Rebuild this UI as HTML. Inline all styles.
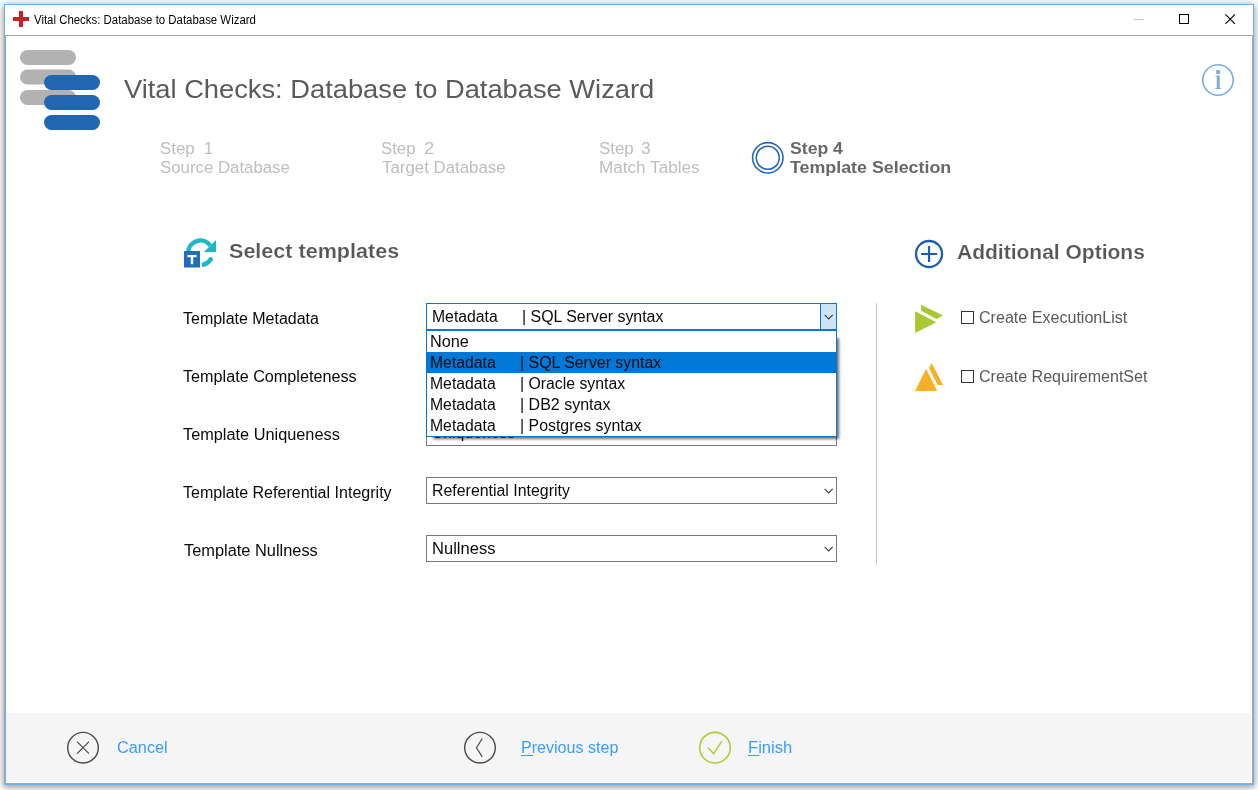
<!DOCTYPE html>
<html>
<head>
<meta charset="utf-8">
<title>Vital Checks: Database to Database Wizard</title>
<style>
html,body{margin:0;padding:0;}
body{width:1258px;height:790px;overflow:hidden;background:#fff;font-family:"Liberation Sans",sans-serif;position:relative;}
.abs{position:absolute;}
#win{position:absolute;left:4px;top:4px;width:1248px;height:779px;border:1px solid #6db2f2;background:#fff;box-shadow:0 1px 7px 1px rgba(0,0,0,0.33),0 3px 5px rgba(0,0,0,0.10);}
#inner{position:absolute;left:5px;top:35px;width:1246px;height:747px;border:1px solid #a8a5a2;background:#fff;}
#footer{position:absolute;left:6px;top:713px;width:1245px;height:69px;background:#f5f5f5;}
.t{position:absolute;white-space:nowrap;transform-origin:0 0;}
.combo{position:absolute;left:426px;width:409px;height:25px;border:1px solid #7a7a7a;background:#fff;}
.chev{position:absolute;left:396.500px;top:9.700px;}
.cb{position:absolute;width:11px;height:11px;border:1px solid #333;background:#fff;}
.ul{position:absolute;height:1px;background:#3b9cff;}
</style>
</head>
<body>
<div id="win"></div>
<div id="inner"></div>

<!-- title icon: red cross -->
<svg class="abs" style="left:13px;top:11px" width="16" height="16" viewBox="0 0 16 16"><path d="M6 0h4v6h6v4h-6v6H6v-6H0V6h6z" fill="#cc1f26"/></svg>

<!-- window controls -->
<svg class="abs" style="left:1128px;top:8px" width="120" height="24" viewBox="0 0 120 24">
  <path d="M6 11.500h10" stroke="#c2c2c2" stroke-width="1" fill="none"/>
  <rect x="51.500" y="6.500" width="9" height="9" stroke="#000" stroke-width="1" fill="none"/>
  <path d="M97.400 6.300l9.600 9.600M107 6.300l-9.600 9.600" stroke="#000" stroke-width="1.100" fill="none"/>
</svg>

<!-- logo -->
<svg class="abs" style="left:18px;top:48px" width="86" height="86" viewBox="18 48 86 86">
  <rect x="20" y="50" width="56" height="15" rx="7.500" fill="#b2b2b2"/>
  <rect x="20" y="69.500" width="56" height="15" rx="7.500" fill="#b2b2b2"/>
  <rect x="20" y="90" width="56" height="15" rx="7.500" fill="#b2b2b2"/>
  <rect x="44" y="75" width="56" height="15" rx="7.500" fill="#2166b0"/>
  <rect x="44" y="95" width="56" height="15" rx="7.500" fill="#2166b0"/>
  <rect x="44" y="115" width="56" height="15" rx="7.500" fill="#2166b0"/>
</svg>

<!-- info icon -->
<svg class="abs" style="left:1198px;top:60px" width="40" height="40" viewBox="1198 60 40 40">
  <circle cx="1217.950" cy="80" r="15.200" fill="none" stroke="#78ade2" stroke-width="1.600"/>
  <circle cx="1218.100" cy="72.100" r="2.250" fill="#78ade2"/>
  <path d="M1215.300 76.200 L1219.700 75.200 L1219.700 87.500 Q1219.700 88.200 1221.100 88.300 L1221.100 89 L1215.300 89 L1215.300 88.300 Q1216.800 88.200 1216.800 87.500 L1216.800 77.400 Q1216.800 76.700 1215.300 76.900 Z" fill="#78ade2"/>
</svg>

<!-- step 4 rings -->
<svg class="abs" style="left:750px;top:140px" width="36" height="36" viewBox="750 140 36 36">
  <circle cx="767.800" cy="157.800" r="15.200" fill="none" stroke="#2566bc" stroke-width="1.600"/>
  <circle cx="767.800" cy="157.800" r="11.500" fill="none" stroke="#2566bc" stroke-width="1.600"/>
</svg>

<!-- select templates heading icon -->
<svg class="abs" style="left:180px;top:234px" width="40" height="38" viewBox="180 234 40 38">
  <path d="M188.200 252.500 A12.200 12.200 0 0 1 210.300 245.600" fill="none" stroke="#1fb7c4" stroke-width="4.400"/>
  <path d="M216 240 L216 252 L204 252 Z" fill="#1fb7c4"/>
  <clipPath id="cl1"><rect x="201.900" y="250" width="20" height="20"/></clipPath>
  <path d="M210.690 259.260 A12.200 12.200 0 0 1 199.970 264.890" fill="none" stroke="#1fb7c4" stroke-width="4.400" clip-path="url(#cl1)"/>
  <circle cx="210.690" cy="259.260" r="2.200" fill="#1fb7c4"/>
  <rect x="184" y="251" width="16" height="16.500" fill="#216db8"/>
  <path d="M187.500 255h9v2.300h-3.300v7h-2.400v-7h-3.300z" fill="#fff"/>
</svg>

<!-- additional options heading icon -->
<svg class="abs" style="left:912px;top:237px" width="34" height="34" viewBox="912 237 34 34">
  <circle cx="929.050" cy="254" r="13" fill="none" stroke="#1e5eaf" stroke-width="2.300"/>
  <path d="M929.050 245.900V262.100M921 254H937.200" stroke="#1e5eaf" stroke-width="2.200" fill="none"/>
</svg>

<!-- combos -->
<div class="combo" id="c2" style="top:361px;"></div>
<div class="combo" id="c3" style="top:419px;"></div>
<div class="combo" id="c4" style="top:477px;">
  <svg class="chev" width="10" height="7" viewBox="0 0 10 7"><path d="M0.700 0.800l4 4 4-4" fill="none" stroke="#404040" stroke-width="1.200"/></svg></div>
<div class="combo" id="c5" style="top:535px;">
  <svg class="chev" width="10" height="7" viewBox="0 0 10 7"><path d="M0.700 0.800l4 4 4-4" fill="none" stroke="#404040" stroke-width="1.200"/></svg></div>
<div class="combo" id="c1" style="top:303px;border-color:#0078d7;">
  <div style="position:absolute;right:-1px;top:-1px;width:15px;height:25px;border:1px solid #0078d7;background:#cce4f7;"></div>
  <svg class="chev" width="10" height="7" viewBox="0 0 10 7"><path d="M0.700 0.800l4 4 4-4" fill="none" stroke="#404040" stroke-width="1.200"/></svg>
</div>

<!-- separator -->
<div class="abs" style="left:876px;top:303px;width:1px;height:262px;background:#c8c8c8;"></div>

<!-- options icons -->
<svg class="abs" style="left:912px;top:302px" width="34" height="34" viewBox="912 302 34 34">
  <path d="M915.100 311.300 L936.300 322.200 L915.100 333 Z" fill="#a7c830"/>
  <path d="M921.100 304.800 L943 315.400 L936.600 318.900 L921.100 310.800 Z" fill="#a7c830"/>
</svg>
<div class="cb" style="left:961px;top:311px;"></div>
<svg class="abs" style="left:912px;top:360px" width="34" height="34" viewBox="912 360 34 34">
  <path d="M915.100 390.900 L937.200 390.900 L926.100 368.800 Z" fill="#fcae28"/>
  <path d="M931.600 363 L943 385 L937.600 385 L929.050 368.200 Z" fill="#fcae28"/>
</svg>
<div class="cb" style="left:961px;top:370px;"></div>

<!-- footer -->
<div id="footer"></div>
<svg class="abs" style="left:65px;top:730px" width="36" height="36" viewBox="65 730 36 36">
  <circle cx="83" cy="747.700" r="15.300" fill="none" stroke="#4a4a4a" stroke-width="1.400"/>
  <path d="M77 741.700l12 12M89 741.700l-12 12" stroke="#4a4a4a" stroke-width="1.200" fill="none"/>
</svg>
<svg class="abs" style="left:462px;top:730px" width="36" height="36" viewBox="462 730 36 36">
  <circle cx="480" cy="747.700" r="15.300" fill="none" stroke="#4a4a4a" stroke-width="1.400"/>
  <path d="M482.200 738.500l-5.700 9.200 5.700 9.200" stroke="#4a4a4a" stroke-width="1.200" fill="none"/>
</svg>
<svg class="abs" style="left:697px;top:730px" width="36" height="36" viewBox="697 730 36 36">
  <circle cx="715" cy="747.700" r="15.300" fill="none" stroke="#b2c935" stroke-width="1.600"/>
  <path d="M707.900 747.800l5.700 5.800 8.300-12.400" stroke="#b2c935" stroke-width="1.500" fill="none"/>
</svg>
<div class="ul" style="left:521px;top:755px;width:12px;"></div>
<div class="ul" style="left:748px;top:755px;width:11px;"></div>

<div class="t" id="titletext" style="left:33.69px;top:13px;font-size:12px;line-height:14px;font-weight:normal;color:#000;transform:scaleX(0.9514);">Vital Checks: Database to Database Wizard</div>
<div class="t" id="h1" style="left:124.21px;top:74px;font-size:26.4px;line-height:30px;font-weight:normal;color:#5a5a5a;transform:scaleX(1.0337);">Vital Checks: Database to Database Wizard</div>
<div class="t" id="s1a" style="left:160.13px;top:140px;font-size:16px;line-height:17px;font-weight:normal;color:#bebebe;transform:scaleX(1.0558);">Step</div>
<div class="t" id="s1n" style="left:203.92px;top:140px;font-size:16px;line-height:17px;font-weight:normal;color:#bebebe;transform:scaleX(1.0000);">1</div>
<div class="t" id="s1b" style="left:160.13px;top:159px;font-size:16px;line-height:17px;font-weight:normal;color:#bebebe;transform:scaleX(1.0504);">Source Database</div>
<div class="t" id="s2a" style="left:381.13px;top:140px;font-size:16px;line-height:17px;font-weight:normal;color:#bebebe;transform:scaleX(1.0463);">Step</div>
<div class="t" id="s2n" style="left:423.75px;top:140px;font-size:16px;line-height:17px;font-weight:normal;color:#bebebe;transform:scaleX(1.1523);">2</div>
<div class="t" id="s2b" style="left:382.26px;top:159px;font-size:16px;line-height:17px;font-weight:normal;color:#bebebe;transform:scaleX(1.0532);">Target Database</div>
<div class="t" id="s3a" style="left:599.13px;top:140px;font-size:16px;line-height:17px;font-weight:normal;color:#bebebe;transform:scaleX(1.0558);">Step</div>
<div class="t" id="s3n" style="left:641.01px;top:140px;font-size:16px;line-height:17px;font-weight:normal;color:#bebebe;transform:scaleX(1.0783);">3</div>
<div class="t" id="s3b" style="left:599.15px;top:159px;font-size:16px;line-height:17px;font-weight:normal;color:#bebebe;transform:scaleX(1.0705);">Match Tables</div>
<div class="t" id="s4a" style="left:789.66px;top:140px;font-size:16px;line-height:17px;font-weight:bold;color:#686868;transform:scaleX(1.1018);">Step 4</div>
<div class="t" id="s4b" style="left:789.83px;top:159px;font-size:16px;line-height:17px;font-weight:bold;color:#686868;transform:scaleX(1.1146);">Template Selection</div>
<div class="t" id="sec1" style="left:229.44px;top:240px;font-size:20px;line-height:22px;font-weight:bold;color:#575757;transform:scaleX(1.0780);-webkit-text-stroke:0.16px #fff;">Select templates</div>
<div class="t" id="sec2" style="left:957.23px;top:241px;font-size:20px;line-height:22px;font-weight:bold;color:#575757;transform:scaleX(1.0503);-webkit-text-stroke:0.16px #fff;">Additional Options</div>
<div class="t" id="l1" style="left:183.28px;top:310px;font-size:16px;line-height:17px;font-weight:normal;color:#0a0a0a;transform:scaleX(0.9988);">Template Metadata</div>
<div class="t" id="l2" style="left:183.28px;top:368px;font-size:16px;line-height:17px;font-weight:normal;color:#0a0a0a;transform:scaleX(1.0117);">Template Completeness</div>
<div class="t" id="l3" style="left:183.17px;top:426px;font-size:16px;line-height:17px;font-weight:normal;color:#0a0a0a;transform:scaleX(1.0190);">Template Uniqueness</div>
<div class="t" id="l4" style="left:183.18px;top:484px;font-size:16px;line-height:17px;font-weight:normal;color:#0a0a0a;transform:scaleX(1.0024);">Template Referential Integrity</div>
<div class="t" id="l5" style="left:184.37px;top:542px;font-size:16px;line-height:17px;font-weight:normal;color:#0a0a0a;transform:scaleX(1.0231);">Template Nullness</div>
<div class="t" id="o1" style="left:978.94px;top:309px;font-size:16px;line-height:17px;font-weight:normal;color:#595959;transform:scaleX(1.0047);">Create ExecutionList</div>
<div class="t" id="o2" style="left:978.94px;top:368px;font-size:16px;line-height:17px;font-weight:normal;color:#595959;transform:scaleX(1.0021);">Create RequirementSet</div>
<div class="t" id="f1" style="left:116.73px;top:739px;font-size:16px;line-height:17px;font-weight:normal;color:#3b9cff;transform:scaleX(1.0182);">Cancel</div>
<div class="t" id="f2" style="left:520.53px;top:739px;font-size:16px;line-height:17px;font-weight:normal;color:#3b9cff;transform:scaleX(1.0041);">Previous step</div>
<div class="t" id="f3" style="left:747.59px;top:739px;font-size:16px;line-height:17px;font-weight:normal;color:#3b9cff;transform:scaleX(1.0393);">Finish</div>
<div class="t" id="v1a" style="left:431.96px;top:308px;font-size:16px;line-height:17px;font-weight:normal;color:#0a0a0a;transform:scaleX(0.9846);">Metadata</div>
<div class="t" id="v1b" style="left:521.61px;top:308px;font-size:16px;line-height:17px;font-weight:normal;color:#0a0a0a;transform:scaleX(0.9937);">| SQL Server syntax</div>
<div class="t" id="v2" style="left:432.06px;top:366px;font-size:16px;line-height:17px;font-weight:normal;color:#0a0a0a;transform:scaleX(0.9719);">Completeness</div>
<div class="t" id="v3" style="left:432.23px;top:424px;font-size:16px;line-height:17px;font-weight:normal;color:#0a0a0a;transform:scaleX(0.9839);">Uniqueness</div>
<div class="t" id="v4" style="left:432.35px;top:482px;font-size:16px;line-height:17px;font-weight:normal;color:#0a0a0a;transform:scaleX(0.9939);">Referential Integrity</div>
<div class="t" id="v5" style="left:431.80px;top:540px;font-size:16px;line-height:17px;font-weight:normal;color:#0a0a0a;transform:scaleX(1.0346);">Nullness</div>

<!-- dropdown list -->
<div class="abs" style="left:433px;top:337.500px;width:405.500px;height:101px;background:rgba(0,0,0,0.58);filter:blur(1.500px);"></div>
<div id="dd" class="abs" style="left:426px;top:330px;width:409px;height:105px;border:1px solid #0078d7;background:#fff;">
  <div class="abs" style="left:0;top:21px;width:409px;height:21px;background:#0078d7;"></div>
</div>
<div class="t" id="d0" style="left:430.42px;top:333px;font-size:16px;line-height:17px;font-weight:normal;color:#0a0a0a;transform:scaleX(1.0161);">None</div>
<div class="t" id="d1a" style="left:430.46px;top:354px;font-size:16px;line-height:17px;font-weight:normal;color:#0a0a0a;transform:scaleX(0.9846);">Metadata</div>
<div class="t" id="d1b" style="left:520.11px;top:354px;font-size:16px;line-height:17px;font-weight:normal;color:#0a0a0a;transform:scaleX(0.9930);">| SQL Server syntax</div>
<div class="t" id="d2a" style="left:430.46px;top:375px;font-size:16px;line-height:17px;font-weight:normal;color:#0a0a0a;transform:scaleX(0.9846);">Metadata</div>
<div class="t" id="d2b" style="left:520.12px;top:375px;font-size:16px;line-height:17px;font-weight:normal;color:#0a0a0a;transform:scaleX(0.9874);">| Oracle syntax</div>
<div class="t" id="d3a" style="left:430.46px;top:396px;font-size:16px;line-height:17px;font-weight:normal;color:#0a0a0a;transform:scaleX(0.9846);">Metadata</div>
<div class="t" id="d3b" style="left:520.10px;top:396px;font-size:16px;line-height:17px;font-weight:normal;color:#0a0a0a;transform:scaleX(0.9998);">| DB2 syntax</div>
<div class="t" id="d4a" style="left:430.46px;top:417px;font-size:16px;line-height:17px;font-weight:normal;color:#0a0a0a;transform:scaleX(0.9846);">Metadata</div>
<div class="t" id="d4b" style="left:520.11px;top:417px;font-size:16px;line-height:17px;font-weight:normal;color:#0a0a0a;transform:scaleX(0.9924);">| Postgres syntax</div>

</body>
</html>
